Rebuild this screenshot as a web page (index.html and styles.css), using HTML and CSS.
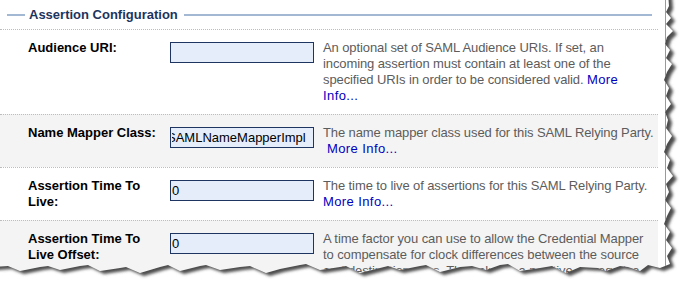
FILE: index.html
```html
<!doctype html>
<html>
<head>
<meta charset="utf-8">
<title>Assertion Configuration</title>
<link rel="stylesheet" href="styles.css">
</head>
<body>

<div class="page">
	<div class="legend"><span>Assertion Configuration</span></div>

	<div class="rows">
		<div class="row">
			<label class="name" for="audience">Audience URI:</label>
			<div class="field"><input type="text" id="audience" name="audience" value=""></div>
			<div class="help">An optional set of SAML Audience URIs. If set, an incoming assertion must contain at least one of the specified URIs in order to be considered valid. <a href="#">More Info...</a></div>
		</div>

		<div class="row alt">
			<label class="name" for="mapper">Name Mapper Class:</label>
			<div class="field"><input type="text" class="tail" id="mapper" name="mapper" value="SAMLNameMapperImpl"></div>
			<div class="help">The name mapper class used for this SAML Relying Party. <a href="#">&nbsp;More Info...</a></div>
		</div>

		<div class="row">
			<label class="name" for="ttl">Assertion Time To Live:</label>
			<div class="field"><input type="text" id="ttl" name="ttl" value="0"></div>
			<div class="help">The time to live of assertions for this SAML Relying Party. <a href="#">More Info...</a></div>
		</div>

		<div class="row alt">
			<label class="name" for="offset">Assertion Time To Live Offset:</label>
			<div class="field"><input type="text" id="offset" name="offset" value="0"></div>
			<div class="help">A time factor you can use to allow the Credential Mapper to compensate for clock differences between the source and destination sites. The value is a positive or negative integer representing seconds. <a href="#">More Info...</a></div>
		</div>
	</div>
</div>

<!-- torn paper edge, laid over the bottom and right side -->
<svg class="tear" width="686" height="283" viewBox="0 0 686 283">
	<defs>
		<filter id="soft" x="-5%" y="-5%" width="110%" height="110%">
			<feGaussianBlur stdDeviation="1.4"/>
		</filter>
		<clipPath id="outside">
			<path clip-rule="evenodd" d="M-30 -30H720V320H-30Z
				M-20 -20H667L669 6 666 12 671 18 666 24 673 31 667 37 665 44 670 50 666 58 672 64 667 72 664 80 669 88 666 96 671 104 665 112 668 120 666 128 672 136 667 144 664 152 670 160 667 168 673 176 666 184 669 192 665 200 671 208 667 216 664 224 670 232 666 240 672 248 667 256 670 264
				L660 268 648 265 640 271 628 267 620 266 606 271 598 268 580 267 566 273 552 266 540 268 520 271 508 264 500 265 486 270 472 266 460 267 440 272 426 265 420 266 400 270 388 266 380 268 360 273 346 266 340 267 320 270 306 264 300 265 280 269 266 273 250 266 240 267 220 270 206 265 200 266 180 271 168 265 160 267 140 273 126 267 120 268 100 271 88 265 80 266 60 270 48 266 40 267 20 271 8 266 -20 268Z"/>
		</clipPath>
	</defs>
	<g clip-path="url(#outside)">
		<rect x="0" y="0" width="686" height="283" fill="#fff"/>
		<path transform="translate(4 3)" fill="#4d4d4d" filter="url(#soft)" d="M-20 -20H667L669 6 666 12 671 18 666 24 673 31 667 37 665 44 670 50 666 58 672 64 667 72 664 80 669 88 666 96 671 104 665 112 668 120 666 128 672 136 667 144 664 152 670 160 667 168 673 176 666 184 669 192 665 200 671 208 667 216 664 224 670 232 666 240 672 248 667 256 670 264
				L660 268 648 265 640 271 628 267 620 266 606 271 598 268 580 267 566 273 552 266 540 268 520 271 508 264 500 265 486 270 472 266 460 267 440 272 426 265 420 266 400 270 388 266 380 268 360 273 346 266 340 267 320 270 306 264 300 265 280 269 266 273 250 266 240 267 220 270 206 265 200 266 180 271 168 265 160 267 140 273 126 267 120 268 100 271 88 265 80 266 60 270 48 266 40 267 20 271 8 266 -20 268Z"/>
	</g>
</svg>

</body>
</html>
```

FILE: styles.css
```css
body {
	margin: 0;
	width: 686px;
	height: 283px;
	overflow: hidden;
	position: relative;
	background: #fff;
	font-family: "Liberation Sans", Arial, sans-serif;
	font-size: 13px;
	color: #000;
}

.page {
	width: 665px;
	height: 283px;
	overflow: hidden;
	border-right: 1px solid #9a9a9a;
}

/* group title with the rule on both sides */
.legend {
	display: flex;
	align-items: center;
	gap: 4px;
	height: 29px;
	padding: 0 13px 0 7px;
	color: #1c355e;
	font-weight: bold;
	font-size: 13px;
}
.legend::before,
.legend::after {
	content: "";
	height: 2px;
	background: #a2b8d3;
}
.legend::before {
	width: 18px;
}
.legend::after {
	flex: 1;
	margin-left: 2px;
}

.rows {
	width: 658px;
}

.row {
	display: grid;
	grid-template-columns: 142px 153px 1fr;
	padding: 10px 0 10px 28px;
	border-top: 1px dotted #bdbdbd;
	line-height: 16px;
}
.row.alt {
	background: #f4f4f4;
}

.name {
	font-weight: bold;
	padding-right: 8px;
}

.field input {
	box-sizing: border-box;
	width: 144px;
	height: 21px;
	margin: 2px 0 0;
	padding: 0 1px;
	border: 1px solid #1d3560;
	background: #e6edfa;
	font-family: "Liberation Sans", Arial, sans-serif;
	font-size: 13px;
	color: #000;
	outline: none;
}
/* long value: show its end, as the scrolled field does */
.field input.tail {
	text-indent: -5px;
}

.help {
	color: #5c5c5c;
	letter-spacing: -0.1px;
	padding-right: 4px;
}
.help a {
	color: #0000c0;
	text-decoration: none;
	letter-spacing: 0.4px;
}

.tear {
	position: absolute;
	left: 0;
	top: 0;
}
```
